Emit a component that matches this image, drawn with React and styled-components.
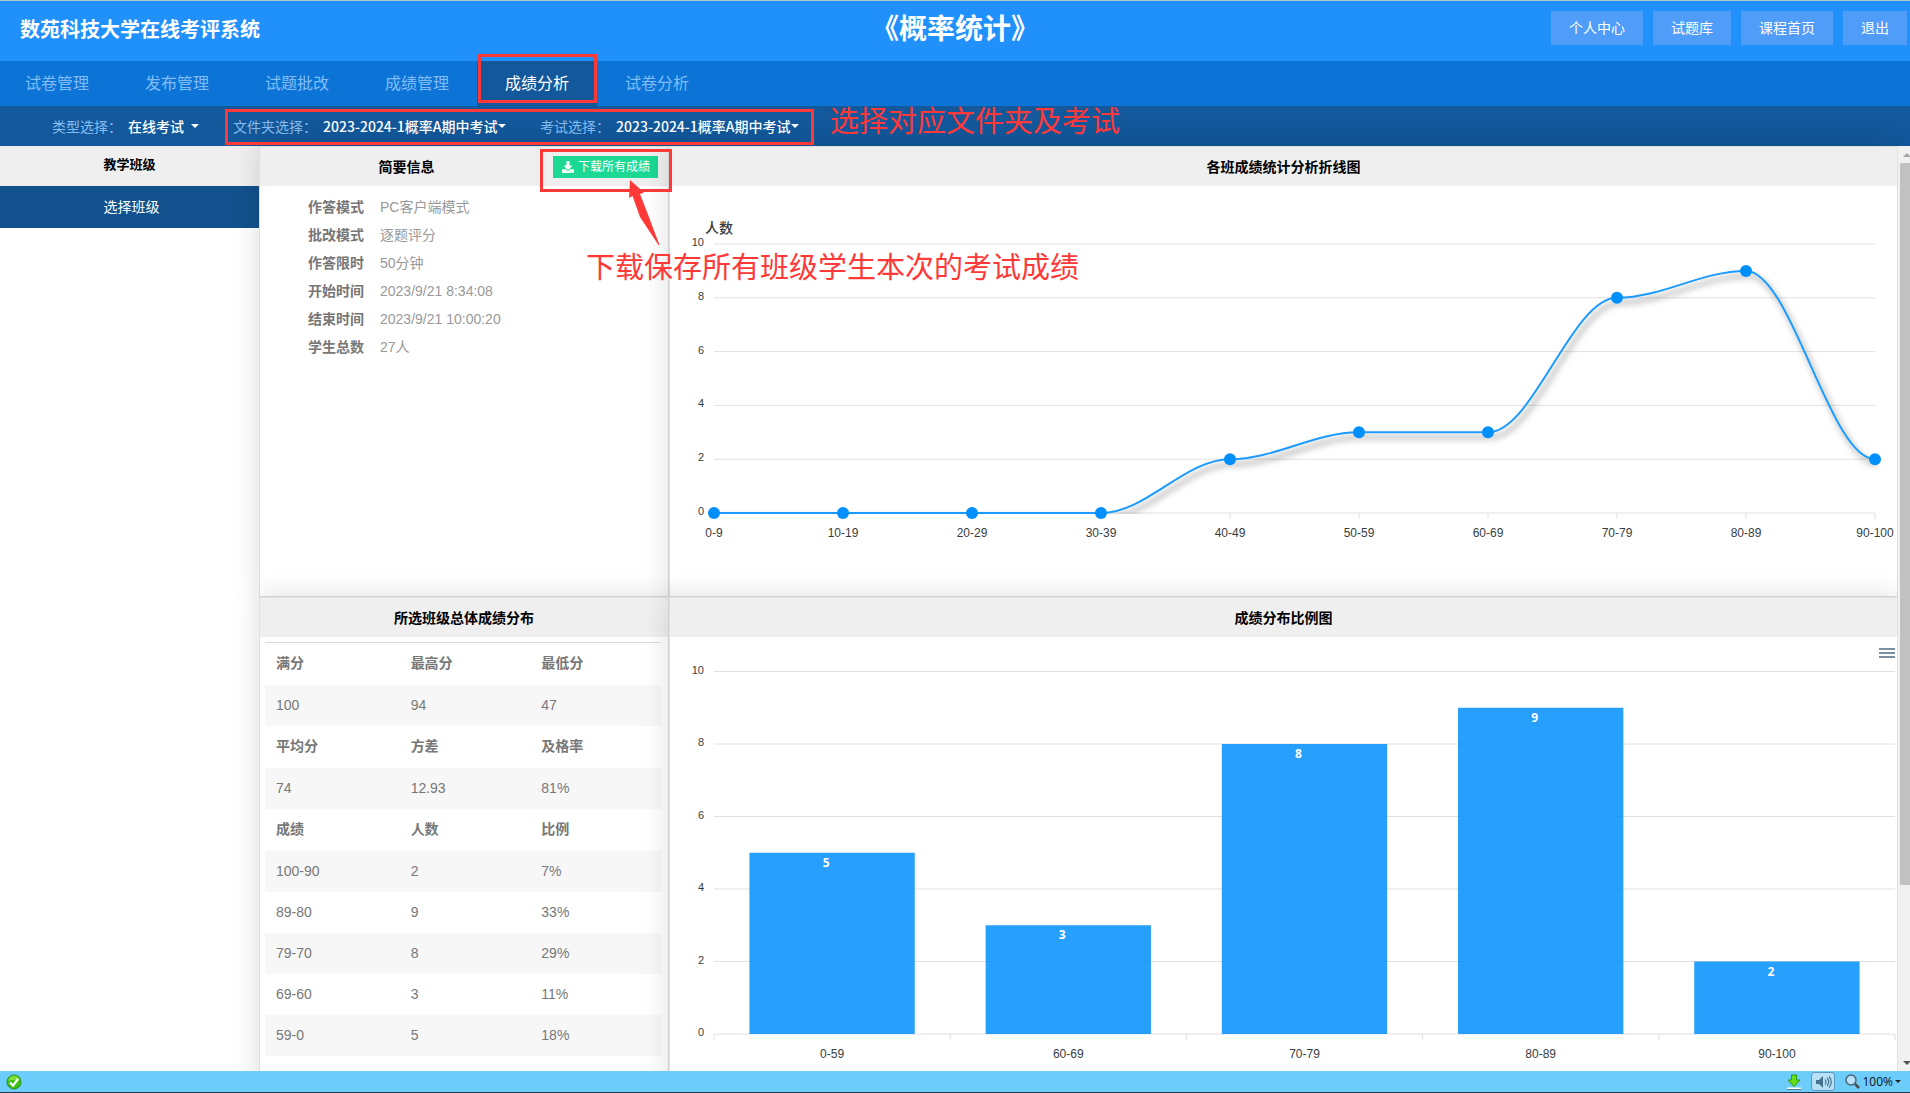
import React, { useLayoutEffect, useRef, useState } from "react";
import styled, { createGlobalStyle } from "styled-components";
import { FaDownload } from "react-icons/fa";

const GlobalStyle = createGlobalStyle`
  * {
    box-sizing: border-box;
  }

  body {
    margin: 0;
    background: #fff;
    font-family: "Liberation Sans", "Noto Sans CJK SC", sans-serif;
    font-size: 14px;
    line-height: 20px;
  }

  button,
  select {
    font-family: inherit;
  }
`;

const Page = styled.div`
  position: relative;
  height: 100vh;
  display: flex;
  flex-direction: column;
  overflow: hidden;
`;

const Header = styled.header`
  display: grid;
  grid-template-columns: 1fr auto 1fr;
  align-items: start;
  height: 61px;
  padding: 10px 3px 0;
  border-top: 1px solid #b4c6d2;
  background: #2090fb;
  color: #fff;
`;

const SiteName = styled.div`
  padding-left: 17px;
  font-size: 20px;
  line-height: 38px;
  font-weight: bold;
`;

const CourseName = styled.h1`
  margin: 0;
  font-size: 28px;
  line-height: 38px;
  font-weight: bold;
`;

const HeaderActions = styled.div`
  display: flex;
  justify-content: flex-end;
  gap: 10px;
`;

const HeaderButton = styled.button`
  height: 34px;
  padding: 0 18px;
  border: none;
  background: #4f9cf9;
  color: #fff;
  font-size: 14px;
  line-height: 34px;
  cursor: pointer;
`;

const Nav = styled.nav`
  display: flex;
  flex-shrink: 0;
  height: 45px;
  margin-left: -3px;
  background: #0c74d6;
`;

const NavLink = styled.a`
  width: 120px;
  line-height: 46px;
  text-align: center;
  font-size: 16px;
  text-decoration: none;
  color: ${(props) => (props.$active ? "#fff" : "#80bdf6")};
  background: ${(props) => (props.$active ? "#12589b" : "transparent")};
`;

const Filters = styled.form`
  display: flex;
  align-items: center;
  flex-shrink: 0;
  gap: 34px;
  height: 40px;
  padding-left: 52px;
  background: #12589b;
`;

const Filter = styled.div`
  display: flex;
  align-items: center;
  font-family: "Noto Sans CJK SC", sans-serif;
`;

const FilterLabel = styled.label`
  margin-right: 6px;
  color: #88bdf0;
`;

const FilterSelect = styled.select`
  appearance: none;
  padding: 0;
  margin-right: ${(props) => (props.$spaced ? "7px" : "0")};
  border: none;
  background: transparent;
  color: #fff;
  font-size: 14px;
  font-weight: 500;
  line-height: 20px;
`;

const Caret = styled.span`
  border: ${(props) => props.$size || 4}px solid transparent;
  border-top-color: ${(props) => props.$color || "#fff"};
  border-bottom: none;
`;

const Content = styled.div`
  display: flex;
  flex: 1;
  min-height: 0;
`;

const Sidebar = styled.aside`
  width: 259px;
  flex-shrink: 0;
`;

const SidebarTitle = styled.h2`
  margin: 0;
  height: 40px;
  background: #efefef;
  text-align: center;
  font-size: 13px;
  line-height: 38px;
  color: #000;
`;

const SidebarLink = styled.a`
  display: block;
  padding-left: 4px;
  background: #12518d;
  color: #fff;
  text-align: center;
  text-decoration: none;
  line-height: 42px;
`;

const Board = styled.main`
  flex: 1;
  min-width: 0;
  display: grid;
  grid-template-columns: 410px minmax(0, 1fr);
  grid-template-rows: 451px 687px;
`;

const Panel = styled.section`
  position: relative;
  min-width: 0;
  border: 1px solid rgba(0, 0, 0, 0.12);
  background: #fff;
  box-shadow: 0 0 26px rgba(0, 0, 0, 0.14);
`;

const PanelHeader = styled.div`
  display: flex;
  align-items: center;
  height: 39px;
  padding-right: ${(props) => (props.$withButton ? "10px" : "0")};
  background: #efefef;
`;

const PanelTitle = styled.h2`
  flex: 1;
  margin: 0;
  text-align: center;
  font-size: 14px;
  line-height: 20px;
  font-weight: bold;
  color: #000;
`;

const DownloadButton = styled.button`
  display: flex;
  align-items: center;
  gap: 3px;
  height: 22px;
  padding: 0 8px;
  border: none;
  background: #1bd893;
  color: #fff;
  font-size: 12px;
  line-height: 22px;
  white-space: nowrap;
  cursor: pointer;

  svg {
    width: 14px;
    height: 12px;
  }
`;

const InfoList = styled.dl`
  display: grid;
  grid-template-columns: 56px 1fr;
  column-gap: 16px;
  margin: 0;
  padding: 7px 0 0 48px;
  line-height: 28px;
  color: #999;

  dt {
    font-weight: bold;
    color: #777;
  }

  dd {
    margin: 0;
  }
`;

const TableBox = styled.div`
  padding: 5px 7px 0 5px;
`;

const ScoreTable = styled.table`
  width: 100%;
  table-layout: fixed;
  border-collapse: collapse;
  border-top: 1px solid #d9d9d9;
  color: #777;

  th,
  td {
    height: 41px;
    padding: 0 11px;
    text-align: left;
  }

  th {
    height: 42px;
    padding-bottom: 2px;
  }

  th:first-child {
    width: 34%;
  }
`;

const ScoreRow = styled.tr`
  background: ${(props) => (props.$striped ? "#f7f7f7" : "transparent")};
`;

const ChartBox = styled.div`
  position: relative;

  svg {
    display: block;
    overflow: visible;
  }
`;

const MenuButton = styled.button`
  position: absolute;
  top: 10px;
  right: 2px;
  display: flex;
  flex-direction: column;
  gap: 2px;
  width: 16px;
  padding: 1px 0;
  border: none;
  background: transparent;

  span {
    height: 2px;
    background: #7c8fa0;
  }
`;

const ScrollBar = styled.div`
  display: flex;
  flex-direction: column;
  flex-shrink: 0;
  width: 12px;
  overflow: hidden;
  position: relative;
  background: #f1f1f1;
`;

const ScrollArrow = styled.div`
  display: flex;
  align-items: center;
  justify-content: center;
  width: 17px;
  height: 17px;

  span {
    border: 4px solid transparent;
    border-${(props) => (props.$up ? "top" : "bottom")}: none;
    border-${(props) => (props.$up ? "bottom" : "top")}-color: ${(props) =>
  props.$up ? "#a3a3a3" : "#505050"};
  }
`;

const ScrollTrack = styled.div`
  flex: 1;
  padding-left: 2px;
`;

const ScrollThumb = styled.div`
  height: 81%;
  background: #c1c1c1;
`;

const StatusBar = styled.footer`
  position: relative;
  display: flex;
  align-items: center;
  flex-shrink: 0;
  height: 22px;
  padding: 0 9px 0 6px;
  border-bottom: 1px solid #22384a;
  background: #6dcdfa;
`;

const StatusTools = styled.div`
  display: flex;
  align-items: center;
  gap: 10px;
  margin-left: auto;
`;

const SoundButton = styled.button`
  display: flex;
  align-items: center;
  justify-content: center;
  width: 24px;
  height: 19px;
  padding: 0;
  border: 1px solid #5a98bd;
  border-radius: 3px;
  background: #b5e0f6;
`;

const ZoomButton = styled.button`
  display: flex;
  align-items: center;
  gap: 2px;
  padding: 0;
  border: none;
  background: transparent;
  font-family: "Open Sans", sans-serif;
  font-size: 12px;
  line-height: 20px;
  color: #111;
`;

const Note = styled.div`
  position: absolute;
  z-index: 2;
  left: ${(props) => props.$left}px;
  top: ${(props) => props.$top}px;
  font-size: 29px;
  line-height: 32px;
  white-space: nowrap;
  color: #ff3838;
  pointer-events: none;
`;

const Marker = styled.div`
  position: absolute;
  z-index: 2;
  left: ${(props) => props.$left}px;
  top: ${(props) => props.$top}px;
  width: ${(props) => props.$width}px;
  height: ${(props) => props.$height}px;
  border: 3px solid #ff3838;
  pointer-events: none;
`;

const Arrow = styled.svg`
  position: absolute;
  z-index: 2;
  left: 629px;
  top: 180px;
`;

const actions = ["个人中心", "试题库", "课程首页", "退出"];

const tabs = [
  "试卷管理",
  "发布管理",
  "试题批改",
  "成绩管理",
  "成绩分析",
  "试卷分析",
];

const filters = [
  { id: "type", label: "类型选择：", value: "在线考试", spaced: true },
  { id: "folder", label: "文件夹选择：", value: "2023-2024-1概率A期中考试" },
  { id: "exam", label: "考试选择：", value: "2023-2024-1概率A期中考试" },
];

const info = [
  ["作答模式", "PC客户端模式"],
  ["批改模式", "逐题评分"],
  ["作答限时", "50分钟"],
  ["开始时间", "2023/9/21 8:34:08"],
  ["结束时间", "2023/9/21 10:00:20"],
  ["学生总数", "27人"],
];

const scores = [
  { head: true, cells: ["满分", "最高分", "最低分"] },
  { cells: ["100", "94", "47"] },
  { head: true, cells: ["平均分", "方差", "及格率"] },
  { cells: ["74", "12.93", "81%"] },
  { head: true, cells: ["成绩", "人数", "比例"] },
  { cells: ["100-90", "2", "7%"] },
  { cells: ["89-80", "9", "33%"] },
  { cells: ["79-70", "8", "29%"] },
  { cells: ["69-60", "3", "11%"] },
  { cells: ["59-0", "5", "18%"] },
];

const lineData = [
  ["0-9", 0],
  ["10-19", 0],
  ["20-29", 0],
  ["30-39", 0],
  ["40-49", 2],
  ["50-59", 3],
  ["60-69", 3],
  ["70-79", 8],
  ["80-89", 9],
  ["90-100", 2],
];

const barData = [
  ["0-59", 5],
  ["60-69", 3],
  ["70-79", 8],
  ["80-89", 9],
  ["90-100", 2],
];

const levels = [0, 2, 4, 6, 8, 10];

function useWidth() {
  const ref = useRef(null);
  const [width, setWidth] = useState(0);

  useLayoutEffect(() => {
    const update = () => setWidth(ref.current.clientWidth);
    update();
    window.addEventListener("resize", update);
    return () => window.removeEventListener("resize", update);
  }, []);

  return [ref, width];
}

function Grid({ left, right, bottom, step }) {
  return levels.map((level) => {
    const y = bottom - level * step;
    return (
      <g key={level}>
        <line x1={left} x2={right} y1={y} y2={y} stroke="#e0e0e0" />
        <text x={left - 10} y={y + 2} textAnchor="end" fontSize="11" fill="#373d3f">
          {level}
        </text>
      </g>
    );
  });
}

function LineChart() {
  const [ref, width] = useWidth();
  const left = 44;
  const right = width - 22;
  const bottom = 327;
  const step = 26.9;
  const gap = (right - left) / (lineData.length - 1);
  const points = lineData.map(([, value], i) => [
    left + i * gap,
    bottom - value * step,
  ]);

  const path = points
    .map(([x, y], i) => {
      if (i === 0) return `M${x} ${y}`;
      const [px, py] = points[i - 1];
      const bend = (x - px) * 0.35;
      return `C${px + bend} ${py} ${x - bend} ${y} ${x} ${y}`;
    })
    .join(" ");

  return (
    <ChartBox ref={ref}>
      {width > 0 && (
        <svg width={width} height="370">
          <defs>
            <filter
              id="lineShadow"
              filterUnits="userSpaceOnUse"
              x="0"
              y="0"
              width={width}
              height="370"
            >
              <feDropShadow dx="3" dy="5" stdDeviation="3" floodOpacity="0.55" />
            </filter>
            <clipPath id="plotArea">
              <rect x={left - 6} y="0" width={right - left + 12} height={bottom + 1} />
            </clipPath>
          </defs>
          <text x="35" y="47" fontSize="14" fontWeight="500" fill="#373d3f">
            人数
          </text>
          <Grid left={left} right={right} bottom={bottom} step={step} />
          <g clipPath="url(#plotArea)">
            <path
              d={path}
              fill="none"
              stroke="#1c9aff"
              strokeWidth="2"
              filter="url(#lineShadow)"
            />
          </g>
          {points.map(([x, y], i) => (
            <g key={lineData[i][0]}>
              <line x1={x} x2={x} y1={bottom} y2={bottom + 6} stroke="#e0e0e0" />
              <circle cx={x} cy={y} r="6" fill="#008ffb" />
              <text x={x} y="351" textAnchor="middle" fontSize="12" fill="#373d3f">
                {lineData[i][0]}
              </text>
            </g>
          ))}
        </svg>
      )}
    </ChartBox>
  );
}

function BarChart() {
  const [ref, width] = useWidth();
  const left = 44;
  const right = width - 2;
  const bottom = 397;
  const step = 36.25;
  const slot = (right - left) / barData.length;
  const barWidth = slot * 0.7;

  return (
    <ChartBox ref={ref}>
      {width > 0 && (
        <svg width={width} height="440">
          <Grid left={left} right={right} bottom={bottom} step={step} />
          {barData.map(([name, value], i) => {
            const center = left + slot * (i + 0.5);
            const top = bottom - value * step;
            return (
              <g key={name}>
                <line
                  x1={left + slot * i}
                  x2={left + slot * i}
                  y1={bottom}
                  y2={bottom + 6}
                  stroke="#e0e0e0"
                />
                <rect
                  x={center - barWidth / 2}
                  y={top}
                  width={barWidth}
                  height={value * step}
                  fill="#008ffb"
                  fillOpacity="0.85"
                />
                <text
                  x={center - 6}
                  y={top + 14}
                  textAnchor="middle"
                  fontFamily="Open Sans"
                  fontSize="12"
                  fontWeight="bold"
                  fill="#fff"
                >
                  {value}
                </text>
                <text
                  x={center}
                  y={bottom + 24}
                  textAnchor="middle"
                  fontSize="12"
                  fill="#373d3f"
                >
                  {name}
                </text>
              </g>
            );
          })}
          <line x1={right} x2={right} y1={bottom} y2={bottom + 6} stroke="#e0e0e0" />
        </svg>
      )}
      <MenuButton type="button" aria-label="菜单">
        <span />
        <span />
        <span />
      </MenuButton>
    </ChartBox>
  );
}

function CheckIcon() {
  return (
    <svg width="16" height="16" viewBox="0 0 16 16">
      <circle cx="8" cy="8" r="7" fill="#3fbd16" stroke="#2a8f12" />
      <path d="M2.500 7a5.500 5.500 0 0 1 11 0q-5.500-2-11 0z" fill="#7be03c" />
      <path d="M4 8.500l3 3 5-6.500" fill="none" stroke="#fff" strokeWidth="2.200" />
    </svg>
  );
}

function SaveIcon() {
  return (
    <svg width="14" height="16" viewBox="0 0 14 16">
      <path
        d="M4.500 1h5v5h3.500l-6 6.500L1 6h3.500z"
        fill="#66dd10"
        stroke="#2e9a10"
      />
      <path d="M0 14.500h14" stroke="#fff" strokeWidth="2" />
      <path d="M0 15.500h14" stroke="#5a7d90" />
    </svg>
  );
}

function SoundIcon() {
  return (
    <svg width="17" height="14" viewBox="0 0 17 14">
      <path d="M1 5h3l4-4v12L4 9H1z" fill="#4a7291" />
      <path
        d="M10 4.500q2 2.500 0 5M12 3q3.500 4 0 8M14 1.500q4.500 5.500 0 11"
        fill="none"
        stroke="#4a7291"
        strokeWidth="1.200"
      />
    </svg>
  );
}

function LensIcon() {
  return (
    <svg width="15" height="15" viewBox="0 0 15 15">
      <circle cx="6" cy="6" r="5" fill="#b9e3f8" stroke="#4b6577" strokeWidth="1.500" />
      <path d="M10 10l4 4" stroke="#4b4b4b" strokeWidth="2.500" />
    </svg>
  );
}

function App() {
  return (
    <Page>
      <GlobalStyle />
      <Header>
        <SiteName>数苑科技大学在线考评系统</SiteName>
        <CourseName>《概率统计》</CourseName>
        <HeaderActions>
          {actions.map((action) => (
            <HeaderButton type="button" key={action}>
              {action}
            </HeaderButton>
          ))}
        </HeaderActions>
      </Header>

      <Nav>
        {tabs.map((tab) => (
          <NavLink href="#" key={tab} $active={tab === "成绩分析"}>
            {tab}
          </NavLink>
        ))}
      </Nav>

      <Filters>
        {filters.map((filter) => (
          <Filter key={filter.id}>
            <FilterLabel htmlFor={filter.id}>{filter.label}</FilterLabel>
            <FilterSelect id={filter.id} $spaced={filter.spaced}>
              <option>{filter.value}</option>
            </FilterSelect>
            <Caret />
          </Filter>
        ))}
      </Filters>

      <Content>
        <Sidebar>
          <SidebarTitle>教学班级</SidebarTitle>
          <SidebarLink href="#">选择班级</SidebarLink>
        </Sidebar>

        <Board>
          <Panel>
            <PanelHeader $withButton>
              <PanelTitle>简要信息</PanelTitle>
              <DownloadButton type="button">
                <FaDownload />
                下载所有成绩
              </DownloadButton>
            </PanelHeader>
            <InfoList>
              {info.map(([name, value]) => (
                <React.Fragment key={name}>
                  <dt>{name}</dt>
                  <dd>{value}</dd>
                </React.Fragment>
              ))}
            </InfoList>
          </Panel>

          <Panel>
            <PanelHeader>
              <PanelTitle>各班成绩统计分析折线图</PanelTitle>
            </PanelHeader>
            <LineChart />
          </Panel>

          <Panel>
            <PanelHeader>
              <PanelTitle>所选班级总体成绩分布</PanelTitle>
            </PanelHeader>
            <TableBox>
              <ScoreTable>
                <tbody>
                  {scores.map((row, i) => (
                    <ScoreRow key={i} $striped={i % 2 === 1}>
                      {row.cells.map((cell) =>
                        row.head ? (
                          <th key={cell}>{cell}</th>
                        ) : (
                          <td key={cell}>{cell}</td>
                        )
                      )}
                    </ScoreRow>
                  ))}
                </tbody>
              </ScoreTable>
            </TableBox>
          </Panel>

          <Panel>
            <PanelHeader>
              <PanelTitle>成绩分布比例图</PanelTitle>
            </PanelHeader>
            <BarChart />
          </Panel>
        </Board>

        <ScrollBar>
          <ScrollArrow $up>
            <span />
          </ScrollArrow>
          <ScrollTrack>
            <ScrollThumb />
          </ScrollTrack>
          <ScrollArrow>
            <span />
          </ScrollArrow>
        </ScrollBar>
      </Content>

      <StatusBar>
        <CheckIcon />
        <StatusTools>
          <SaveIcon />
          <SoundButton type="button" aria-label="声音">
            <SoundIcon />
          </SoundButton>
          <ZoomButton type="button">
            <LensIcon />
            100%
            <Caret $size={3} $color="#222" />
          </ZoomButton>
        </StatusTools>
      </StatusBar>

      <Marker $left={478} $top={54} $width={119} $height={49} />
      <Marker $left={225} $top={109} $width={589} $height={36} />
      <Marker $left={540} $top={149} $width={132} $height={43} />
      <Note $left={830} $top={106}>
        选择对应文件夹及考试
      </Note>
      <Note $left={586} $top={252}>
        下载保存所有班级学生本次的考试成绩
      </Note>
      <Arrow width="32" height="66" viewBox="0 0 32 66">
        <path d="M1 0L15 12.500L11 14L18 32L30.500 65L29.500 65L11 37L3.500 16L0 18z" fill="#ff3838" />
      </Arrow>
    </Page>
  );
}

export default App;
